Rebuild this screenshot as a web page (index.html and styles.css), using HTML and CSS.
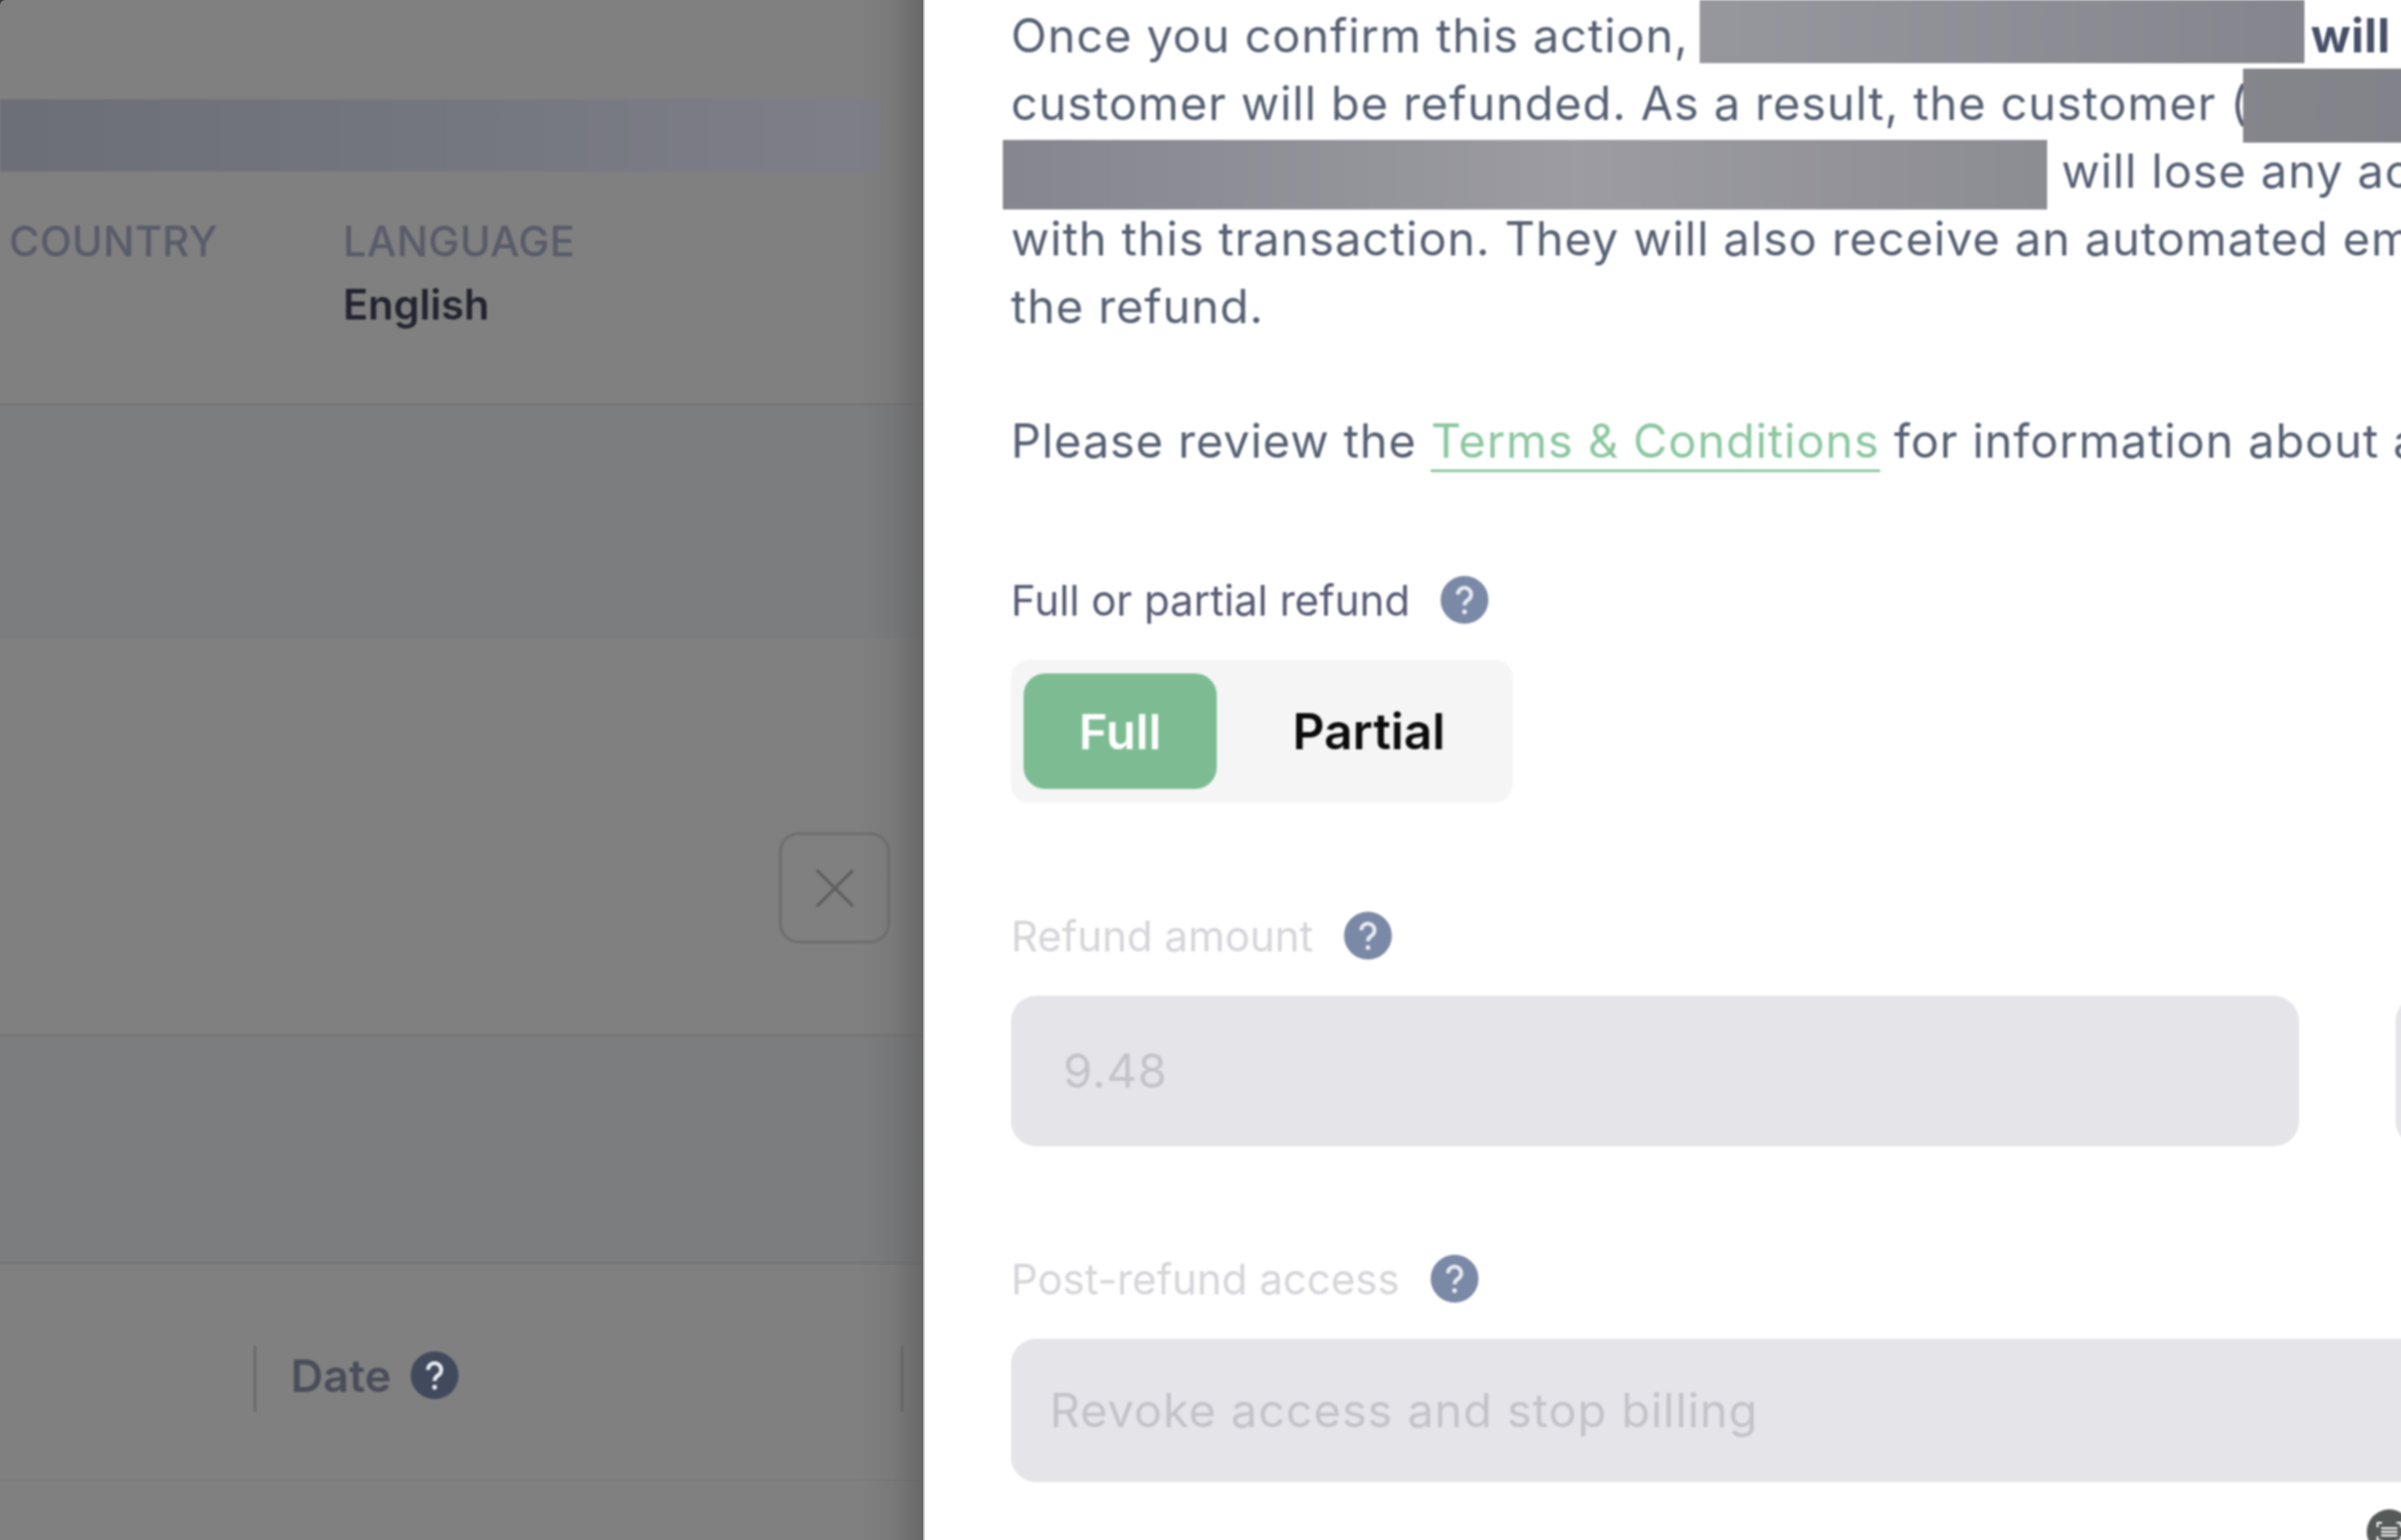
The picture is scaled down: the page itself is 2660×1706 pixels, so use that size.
FILE: index.html
```html
<!DOCTYPE html>
<html lang="en">
<head>
    <meta charset="UTF-8">
    <title>Refund order</title>
    <link rel="stylesheet" href="styles.css">
</head>
<body>
    <div class="page">
        <div class="order">
            <section class="order-info">
                <div class="order-band soft"></div>
                <div class="meta soft">
                    <div class="meta-item meta-country">
                        <div class="meta-label">COUNTRY</div>
                    </div>
                    <div class="meta-item">
                        <div class="meta-label">LANGUAGE</div>
                        <div class="meta-value">English</div>
                    </div>
                </div>
            </section>
            <section class="tint-row"></section>
            <section class="plain-row"></section>
            <section class="tint-row tint-row-second"></section>
            <section class="table-head">
                <div class="table-col soft">
                    <span class="table-title">Date</span>
                    <svg class="help help-dark" viewBox="0 0 24 24"><circle cx="12" cy="12" r="12"/><path d="M8.700 9.300a3.300 3.300 0 1 1 5 2.800c-1.100.7-1.700 1.300-1.700 2.700"/><circle class="help-dot" cx="12" cy="18" r="1.200"/></svg>
                </div>
            </section>
            <div class="order-shade"></div>
            <button class="close-btn soft">
                <svg viewBox="0 0 44 44"><path d="M2 2L42 42M42 2L2 42"/></svg>
            </button>
        </div>

        <aside class="drawer">
            <div class="intro soft">
                <div class="line">Once you confirm this action, <span class="redact redact-one"></span> <b>will</b></div>
                <div class="line">customer will be refunded. As a result, the customer (<span class="redact redact-two"></span></div>
                <div class="line"><span class="redact redact-three"></span> will lose any access</div>
                <div class="line">with this transaction. They will also receive an automated email</div>
                <div class="line">the refund.</div>
            </div>
            <div class="line terms soft">Please review the <a href="#">Terms &amp; Conditions</a> for information about a</div>

            <div class="field-label label-type soft">
                <span>Full or partial refund</span>
                <svg class="help" viewBox="0 0 24 24"><circle cx="12" cy="12" r="12"/><path d="M8.700 9.300a3.300 3.300 0 1 1 5 2.800c-1.100.7-1.700 1.300-1.700 2.700"/><circle class="help-dot" cx="12" cy="18" r="1.200"/></svg>
            </div>
            <div class="toggle soft">
                <div class="toggle-btn toggle-on">Full</div>
                <div class="toggle-btn toggle-off">Partial</div>
            </div>

            <div class="field-label label-amount disabled soft">
                <span>Refund amount</span>
                <svg class="help" viewBox="0 0 24 24"><circle cx="12" cy="12" r="12"/><path d="M8.700 9.300a3.300 3.300 0 1 1 5 2.800c-1.100.7-1.700 1.300-1.700 2.700"/><circle class="help-dot" cx="12" cy="18" r="1.200"/></svg>
            </div>
            <div class="amount-row soft">
                <div class="input input-amount">9.48</div>
                <div class="input input-side"></div>
            </div>

            <div class="field-label label-access disabled soft">
                <span>Post-refund access</span>
                <svg class="help" viewBox="0 0 24 24"><circle cx="12" cy="12" r="12"/><path d="M8.700 9.300a3.300 3.300 0 1 1 5 2.800c-1.100.7-1.700 1.300-1.700 2.700"/><circle class="help-dot" cx="12" cy="18" r="1.200"/></svg>
            </div>
            <div class="input input-access soft">Revoke access and stop billing</div>

            <div class="chat-btn soft">
                <svg viewBox="0 0 50 50"><path d="M12 20v-5h5M33 15h5v5M12 30v5h5M33 35h5v-5"/><path d="M16 21h18M16 25h18M16 29h18"/></svg>
            </div>
        </aside>
    </div>
</body>
</html>
```

FILE: styles.css
```css
* {
    box-sizing: border-box;
}

body {
    margin: 0;
    background-color: #3a3a3a;
    font-family: 'Inter', 'Liberation Sans', sans-serif;
}

.page {
    display: flex;
    width: 2660px;
    height: 1706px;
    overflow: hidden;
}

/* the source capture is slightly out of focus */
.soft {
    filter: blur(0.8px);
}

/* dimmed page behind the drawer */
.order {
    position: relative;
    flex: none;
    width: 1023px;
    background-color: #808080;
    border-top-left-radius: 6px;
}

.order-info {
    height: 450px;
    padding-top: 110px;
    border-bottom: 4px solid #787878;
}

.order-band {
    width: 976px;
    height: 80px;
    background: linear-gradient(90deg, #6c6f76, #72757c 40%, #7f7f89);
}

.meta {
    display: flex;
    padding: 50px 0 0 10px;
}

.meta-country {
    width: 370px;
}

.meta-label {
    font-size: 46px;
    line-height: 54px;
    letter-spacing: 0.4px;
    font-weight: 500;
    color: #585b69;
}

.meta-value {
    margin-top: 16px;
    font-size: 46px;
    line-height: 54px;
    font-weight: 600;
    color: #22242f;
}

.tint-row {
    height: 257px;
    background-color: #7c7d7f;
}

.plain-row {
    height: 438px;
}

.tint-row-second {
    height: 256px;
    border-top: 4px solid #787878;
    border-bottom: 4px solid #787878;
}

.table-head {
    height: 240px;
    padding: 90px 0 0 281px;
    border-bottom: 2px solid #7b7b7b;
}

.table-col {
    display: flex;
    align-items: center;
    gap: 21px;
    width: 720px;
    height: 73px;
    padding: 0 0 8px 38px;
    border-left: 3px solid #6a6a6a;
    border-right: 3px solid #6a6a6a;
}

.table-title {
    font-size: 50px;
    font-weight: 600;
    color: #4a4d5a;
}

.order-shade {
    position: absolute;
    top: 0;
    right: 0;
    bottom: 0;
    width: 70px;
    background: linear-gradient(90deg, rgba(96, 96, 96, 0), rgba(96, 96, 96, 0.2) 50%, rgba(96, 96, 96, 0.75));
}

.close-btn {
    position: absolute;
    left: 863px;
    top: 922px;
    width: 123px;
    height: 123px;
    padding: 0;
    display: flex;
    align-items: center;
    justify-content: center;
    background: none;
    border: 3px solid #6d6d6d;
    border-radius: 22px;
}

.close-btn svg {
    width: 44px;
    height: 44px;
    fill: none;
    stroke: #5f5f5f;
    stroke-width: 3.500;
}

/* refund drawer */
.drawer {
    position: relative;
    flex: 1;
    min-width: 0;
    padding: 2px 0 0 95px;
    background-color: #fff;
    border-left: 2px solid #d6d6d6;
    overflow: hidden;
    font-size: 52px;
    color: #566073;
}

.line {
    line-height: 75px;
    white-space: nowrap;
    letter-spacing: 1px;
}

.line b {
    color: #475069;
    font-weight: 700;
    letter-spacing: 0.5px;
}

.redact {
    display: inline-block;
    vertical-align: top;
}

.redact-one {
    width: 670px;
    height: 70px;
    margin: -2px -9px 7px -3px;
    background: linear-gradient(90deg, #97979e, #85868d);
}

.redact-two {
    width: 400px;
    height: 82px;
    margin: -1px 0 -6px -6px;
    background: linear-gradient(90deg, #85858c, #7f8087);
}

.redact-three {
    width: 1157px;
    height: 77px;
    margin: 3px 0 -5px -9px;
    background: linear-gradient(90deg, #85868e, #9c9ca2 55%, #8c8d93);
}

.terms {
    margin-top: 74px;
}

.terms a {
    color: #8cc7a0;
    text-decoration: none;
    border-bottom: 3px solid #8cc7a0;
}

.field-label {
    display: flex;
    align-items: center;
    gap: 34px;
    height: 53px;
    font-size: 46.500px;
    color: #565a74;
}

.label-type {
    margin-top: 112px;
}

.label-amount {
    margin-top: 121px;
}

.label-access {
    margin-top: 120px;
}

.disabled {
    color: #d5d5da;
}

.help {
    flex: none;
    width: 53px;
    height: 53px;
    fill: #7a89a6;
}

.help path {
    fill: none;
    stroke: #e6e9ef;
    stroke-width: 2;
}

.help .help-dot {
    fill: #e6e9ef;
}

.help-dark {
    fill: #414a5c;
}

.toggle {
    display: flex;
    width: 556px;
    height: 158px;
    margin-top: 40px;
    padding: 15px 14px;
    background-color: #f5f5f5;
    border-radius: 20px;
}

.toggle-btn {
    display: flex;
    align-items: center;
    font-size: 54px;
    font-weight: 600;
    border-radius: 24px;
}

.toggle-on {
    justify-content: center;
    width: 214px;
    background-color: #7dbc93;
    color: #fff;
}

.toggle-off {
    padding-left: 84px;
    font-size: 55px;
    color: #0c0c0c;
}

.amount-row {
    display: flex;
    gap: 107px;
    margin-top: 40px;
}

.input {
    display: flex;
    align-items: center;
    flex: none;
    height: 167px;
    background-color: #e5e4e9;
    border-radius: 28px;
    font-size: 52px;
    letter-spacing: 1px;
    color: #c3c3c9;
}

.input-amount {
    width: 1427px;
    padding-left: 58px;
}

.input-side {
    width: 300px;
}

.input-access {
    width: 1700px;
    height: 159px;
    margin-top: 40px;
    padding-left: 43px;
}

.chat-btn {
    position: absolute;
    left: 1597px;
    top: 1672px;
    width: 50px;
    height: 50px;
    background-color: #555a58;
    border-radius: 50%;
}

.chat-btn svg {
    display: block;
    fill: none;
    stroke: #fff;
    stroke-width: 2;
}
```
